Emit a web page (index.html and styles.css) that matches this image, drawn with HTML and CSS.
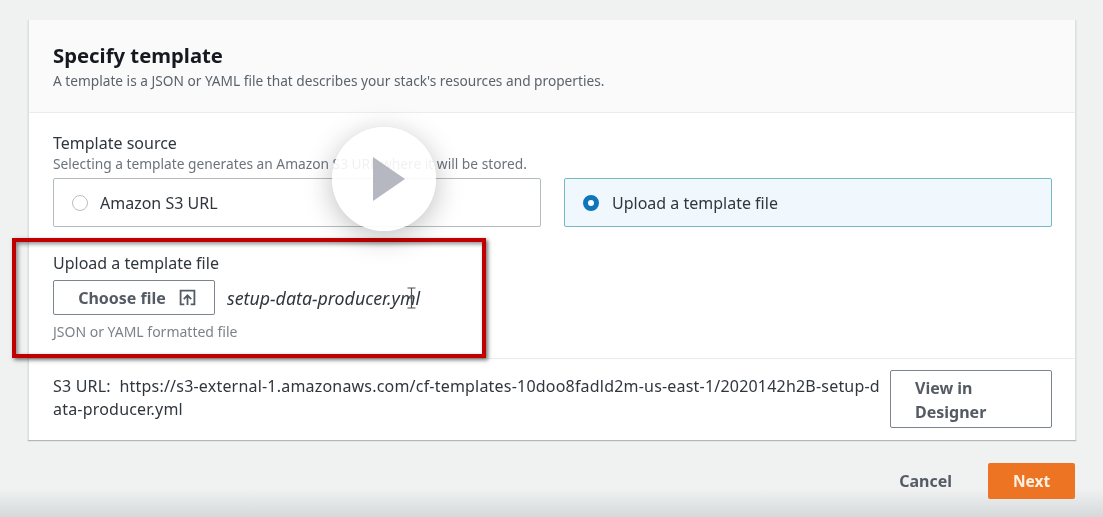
FILE: index.html
```html
<!DOCTYPE html>
<html lang="en">
<head>
  <meta charset="UTF-8">
  <title>Specify template</title>
  <link rel="stylesheet" href="styles.css">
</head>
<body>

  <div class="page">
    <div class="card">
      <div class="card-head">
        <h2>Specify template</h2>
        <p>A template is a JSON or YAML file that describes your stack's resources and properties.</p>
      </div>

      <div class="source">
        <div class="label">Template source</div>
        <div class="hint">Selecting a template generates an Amazon S3 URL where it will be stored.</div>
        <div class="tiles">
          <div class="tile"><span class="radio"></span>Amazon S3 URL</div>
          <div class="tile tile-on"><span class="radio radio-on"></span>Upload a template file</div>
        </div>
      </div>

      <div class="upload">
        <div class="label">Upload a template file</div>
        <div class="file-row">
          <div class="btn-choose">
            Choose file
            <svg class="up-icon" width="17" height="17" viewBox="0 0 16 16" fill="none" stroke="#545b64" stroke-width="1.7">
              <path d="M5 14.5H1.5v-13h13v13H11"/>
              <path d="M8 15V6M4.5 9.5 8 6l3.5 3.5"/>
            </svg>
          </div>
          <span class="file-name">setup-data-producer.yml</span>
        </div>
        <div class="small">JSON or YAML formatted file</div>
      </div>

      <div class="s3-row">
        <div class="s3-url">S3 URL:&nbsp; https://s3-external-1.amazonaws.com/cf-templates-10doo8fadld2m-us-east-1/2020142h2B-setup-data-producer.yml</div>
        <div class="btn-designer">View in<br>Designer</div>
      </div>
    </div>

    <div class="actions">
      <span class="cancel">Cancel</span>
      <div class="btn-next">Next</div>
    </div>
  </div>

  <!-- overlays from the video -->
  <div class="red-box"></div>

  <svg class="ibeam" width="11" height="22" viewBox="0 0 11 22" fill="none" stroke="#4a4f55" stroke-width="1.2">
    <path d="M1.5 1h8M5.5 1v20M1.5 21h8M3 11h5"/>
  </svg>

  <div class="play">
    <svg width="32" height="44" viewBox="0 0 32 44"><path d="M0 0 32 22 0 44z" fill="#b5b7c1"/></svg>
  </div>

</body>
</html>
```

FILE: styles.css
```css
html {
  height: 100%;
}
body {
  margin: 0;
  height: 517px;
  overflow: hidden;
  font-family: "Noto Sans", Arial, sans-serif;
  color: #30363d;
  background: linear-gradient(to bottom, #f0f2f2 0, #f0f2f2 488px, #d6d9db 517px);
}
.page {
  padding: 20px 27px 0 28px;
  filter: blur(0.5px);
}
.card {
  background: white;
  border-right: 1px solid #dcdfe0;
  border-left: 1px solid #dcdfe0;
  box-shadow: 0 1px 1px rgba(0,0,0,0.25);
}
.card-head {
  height: 93px;
  padding: 21px 24px 0;
  box-sizing: border-box;
  background: #fafafa;
  border-bottom: 1px solid #eaeded;
}
.card-head h2 {
  margin: 0;
  font-size: 20.3px;
  line-height: 28px;
  font-weight: 700;
  color: #16191f;
}
.card-head p {
  margin: 0;
  font-size: 13.7px;
  line-height: 24px;
  color: #5b636b;
}
.source {
  padding: 19px 23px 0 24px;
}
.label {
  font-size: 16px;
  line-height: 22px;
  color: #30363d;
}
.hint {
  font-size: 13.75px;
  line-height: 20px;
  color: #6b737b;
}
.tiles {
  display: flex;
  gap: 23px;
  margin-top: 4px;
}
.tile {
  flex: 1;
  height: 49px;
  box-sizing: border-box;
  display: flex;
  align-items: center;
  gap: 12px;
  padding-left: 18px;
  border: 1px solid #b4bcbd;
  border-radius: 2px;
  font-size: 16px;
}
.tile-on {
  gap: 13px;
  background: #f1f8fd;
  border: 1.5px solid #74b8c6;
}
.radio {
  width: 16px;
  height: 16px;
  box-sizing: border-box;
  border: 1.5px solid #b8bfc0;
  border-radius: 50%;
  background: white;
}
.radio-on {
  border: 5px solid #0f76bb;
}
.upload {
  padding: 25px 24px 17px;
  border-bottom: 1px solid #eaeded;
}
.file-row {
  display: flex;
  align-items: center;
  gap: 12px;
  margin-top: 6px;
}
.btn-choose {
  width: 162px;
  height: 35px;
  box-sizing: border-box;
  display: flex;
  align-items: center;
  justify-content: center;
  gap: 13px;
  padding-left: 6px;
  border: 1px solid #7d858c;
  border-radius: 2px;
  font-size: 16px;
  font-weight: 700;
  color: #545b64;
}
.file-name {
  font-size: 17.8px;
  font-style: italic;
  color: #30363d;
}
.small {
  margin-top: 8px;
  font-size: 14px;
  line-height: 18px;
  color: #7b838a;
}
.s3-row {
  display: flex;
  gap: 7px;
  padding: 11px 23px 12px 24px;
}
.s3-url {
  flex: 1;
  padding-top: 5px;
  font-size: 16px;
  line-height: 23px;
  letter-spacing: 0.2px;
  word-break: break-all;
}
.btn-designer {
  width: 162px;
  height: 58px;
  box-sizing: border-box;
  padding: 5px 24px;
  border: 1px solid #7d858c;
  border-radius: 2px;
  font-size: 16px;
  line-height: 24px;
  font-weight: 700;
  color: #545b64;
}
.actions {
  display: flex;
  justify-content: flex-end;
  align-items: center;
  gap: 36px;
  margin-top: 23px;
  padding-right: 1px;
}
.cancel {
  font-size: 16px;
  font-weight: 700;
  color: #545b64;
}
.btn-next {
  width: 87px;
  height: 36px;
  display: flex;
  align-items: center;
  justify-content: center;
  background: #ec7422;
  border-radius: 2px;
  font-size: 15.5px;
  font-weight: 700;
  color: #fdf1e3;
}
.red-box {
  position: absolute;
  left: 12px;
  top: 238px;
  width: 466px;
  height: 112px;
  border: 4px solid #c00000;
  box-shadow: 2px 2px 4px rgba(0,0,0,0.55), inset 2px 2px 4px rgba(0,0,0,0.45);
}
.ibeam {
  position: absolute;
  left: 406px;
  top: 287px;
}
.play {
  position: absolute;
  left: 332px;
  top: 127px;
  width: 104px;
  height: 104px;
  display: flex;
  align-items: center;
  justify-content: center;
  padding-left: 10px;
  box-sizing: border-box;
  border-radius: 50%;
  background: rgba(255,255,255,0.9);
  box-shadow: 0 6px 28px rgba(0,0,0,0.25);
}
```
